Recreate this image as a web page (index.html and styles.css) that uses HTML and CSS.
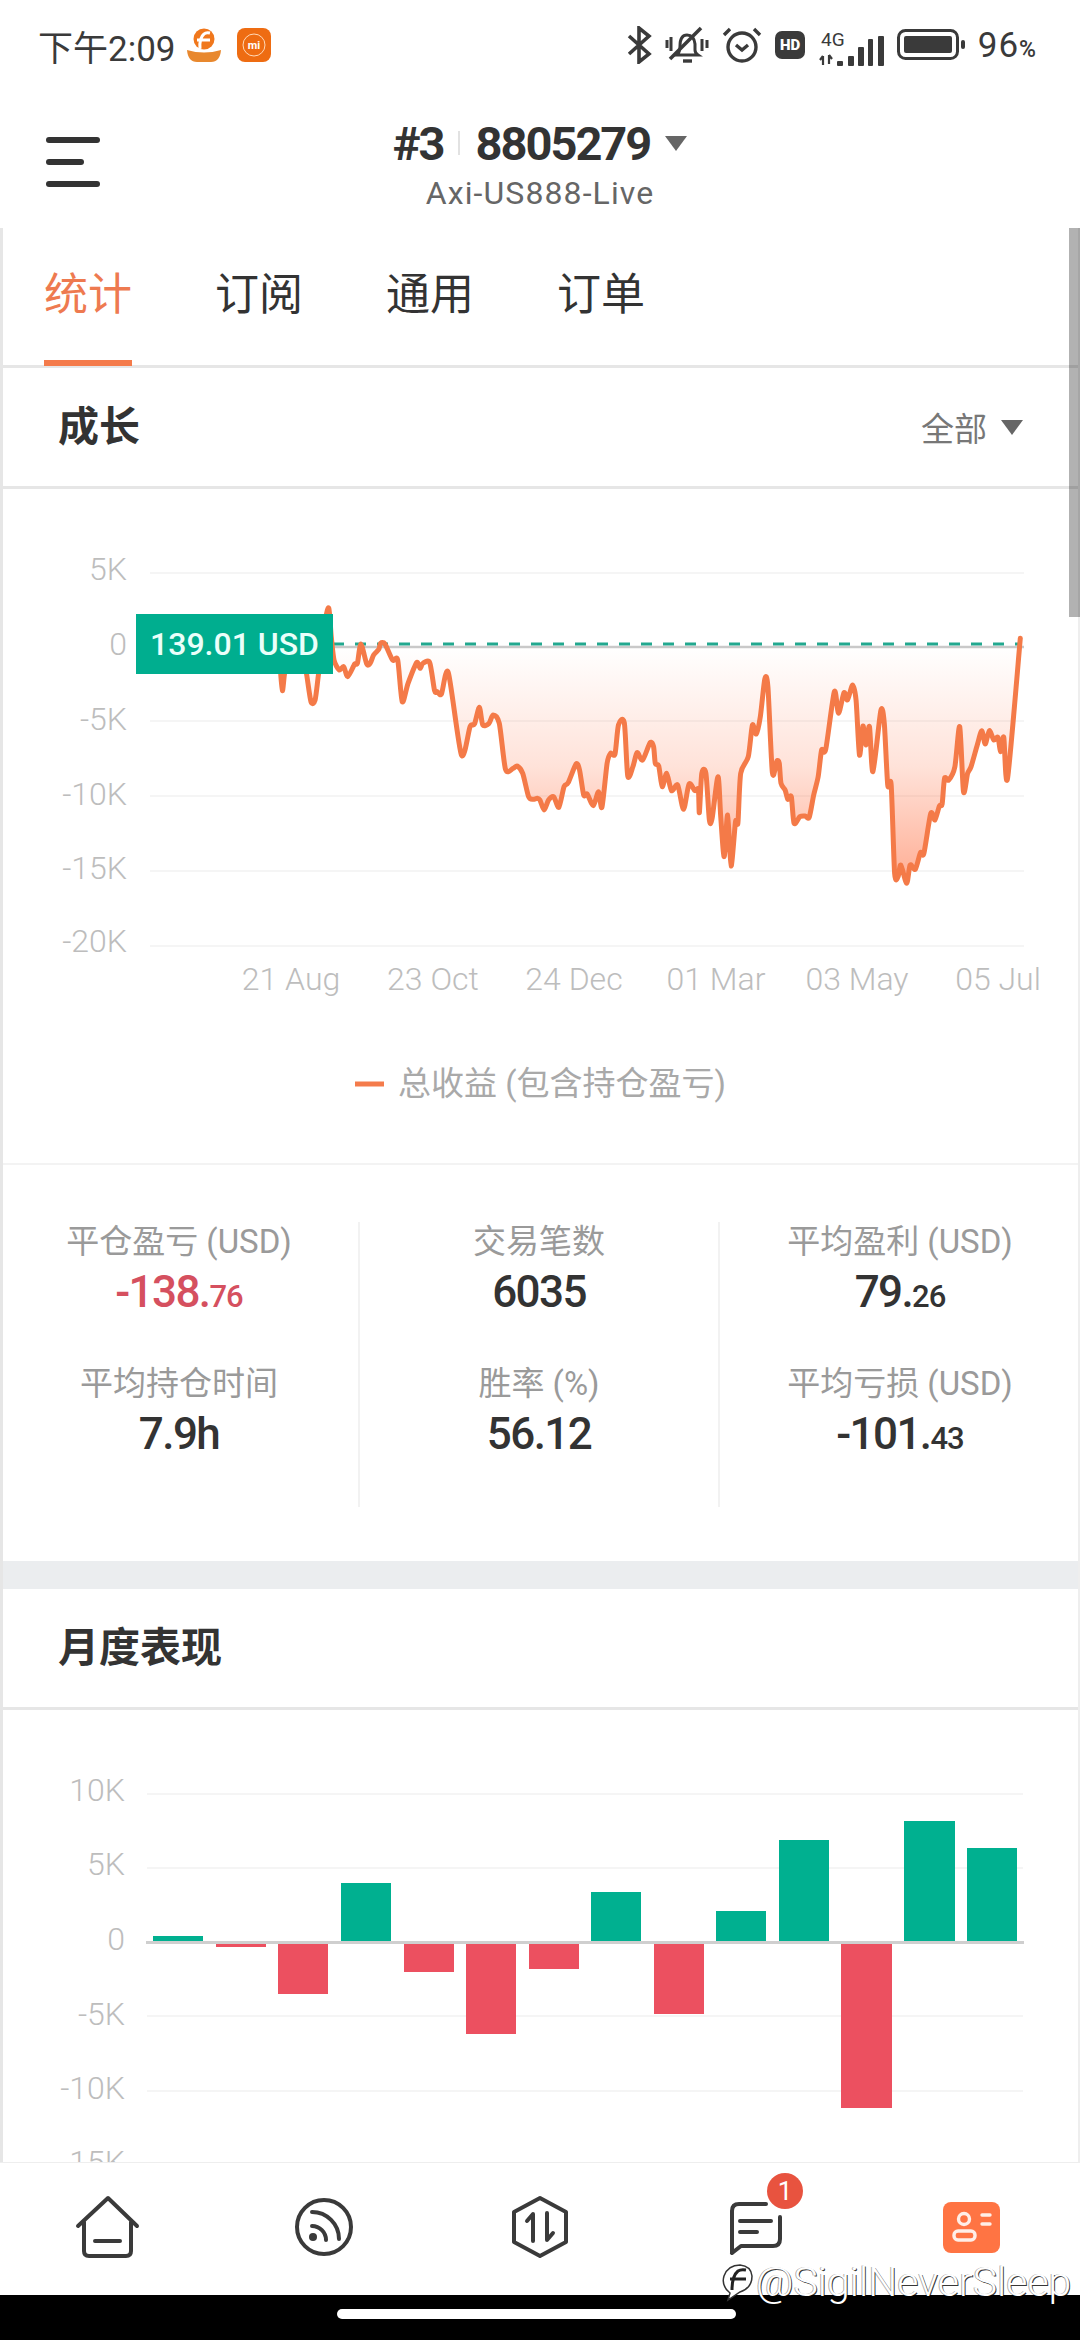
FILE: index.html
```html
<!DOCTYPE html>
<html lang="zh-CN">
<head>
  <meta charset="UTF-8">
  <title>8805279</title>
  <link rel="stylesheet" href="styles.css">
</head>
<body>
<div class="phone">

  <div class="status">
    <div class="status-left">
      <span class="time">下午2:09</span>
      <svg class="app-logo" width="34" height="34" viewBox="0 0 34 34">
        <circle cx="17" cy="11" r="10.5" fill="#f0771c"/>
        <path d="M13 21 Q12 10 17 6 Q19 4 23 5 M10 12 H23" fill="none" stroke="#fff" stroke-width="3"/>
        <path d="M0 22 Q17 27 34 22 Q33 34 24 34 H10 Q1 34 0 22Z" fill="#e8882e"/>
      </svg>
      <svg class="app-logo mi" width="34" height="34" viewBox="0 0 34 34">
        <rect width="34" height="34" rx="8" fill="#ee6c12"/>
        <circle cx="17" cy="17" r="11" fill="none" stroke="#ffd9b8" stroke-width="1"/>
        <text x="17" y="20.5" text-anchor="middle" class="mi-text">mi</text>
      </svg>
    </div>
    <div class="status-right">
      <svg width="25" height="38" viewBox="0 0 25 38" fill="none" stroke="#3a3a3a" stroke-width="3.6">
        <path d="M2 10 L22 28 L12 36 V2 L22 10 L2 28"/>
      </svg>
      <svg width="44" height="38" viewBox="0 0 44 38" fill="none" stroke="#3a3a3a" stroke-width="3">
        <path d="M12 29 Q15 26 15 20 Q15 9 22 9 Q29 9 30 18 V24 Q30 27 33 29 Z"/>
        <path d="M36 2 L5 33" stroke-width="3.6"/>
        <path d="M2 14 V22 M6 11 V25 M37 13 V25 M42 14 V22"/>
        <path d="M18 35 H27" stroke-width="3.4"/>
      </svg>
      <svg width="40" height="36" viewBox="0 0 40 36" fill="none" stroke="#3a3a3a" stroke-width="3.4">
        <circle cx="20" cy="20" r="14"/>
        <path d="M14 18 L20 23 L26 18"/>
        <path d="M2 8 L8 2 M38 8 L32 2"/>
      </svg>
      <svg width="30" height="28" viewBox="0 0 30 28">
        <rect width="30" height="28" rx="7" fill="#3a3a3a"/>
        <text x="15" y="19" text-anchor="middle" class="hd-text">HD</text>
      </svg>
      <svg width="66" height="44" viewBox="0 -8 66 44">
        <text x="3" y="15" class="net-text">4G</text>
        <path d="M5 25 V34 M2 29 L5 25 M11 24 V33 M11 24 L14 28" fill="none" stroke="#3a3a3a" stroke-width="2.2"/>
        <g fill="#3a3a3a">
          <rect x="19" y="30" width="6" height="5" rx="1"/>
          <rect x="30" y="25" width="6" height="10" rx="1"/>
          <rect x="40" y="16" width="6" height="19" rx="1"/>
          <rect x="50" y="8" width="5" height="27" rx="1"/>
          <rect x="60" y="5" width="6" height="30" rx="1"/>
        </g>
      </svg>
      <svg width="68" height="32" viewBox="0 0 68 32">
        <rect x="1.5" y="1.5" width="59" height="28" rx="7" fill="none" stroke="#3a3a3a" stroke-width="3"/>
        <rect x="7" y="7" width="48" height="17" rx="2" fill="#3a3a3a"/>
        <rect x="64" y="11" width="4" height="9" rx="2" fill="#3a3a3a"/>
      </svg>
      <span class="battery">96<small>%</small></span>
    </div>
  </div>

  <header class="topbar">
    <div class="burger"><i></i><i class="short"></i><i></i></div>
    <div class="account">
      <div class="account-id">
        <span>#3</span><b class="sep"></b><span>8805279</span><b class="caret caret-lg"></b>
      </div>
      <div class="account-server">Axi-US888-Live</div>
    </div>
  </header>

  <main class="content">
    <nav class="tabs">
      <a class="tab active">统计</a>
      <a class="tab">订阅</a>
      <a class="tab">通用</a>
      <a class="tab">订单</a>
    </nav>

    <div class="sec-head">
      <h2>成长</h2>
      <div class="filter">全部<b class="caret"></b></div>
    </div>

    <!-- growth chart, viewBox uses screen coordinates -->
    <svg class="chart" width="1080" height="674" viewBox="0 489 1080 674">
      <defs>
        <linearGradient id="areaFade" gradientUnits="userSpaceOnUse" x1="0" y1="381" x2="0" y2="1095">
          <stop offset="0" stop-color="#ff7043" stop-opacity="0"/>
          <stop offset=".5" stop-color="#ff7043" stop-opacity=".2"/>
          <stop offset="1" stop-color="#ff7043" stop-opacity=".58"/>
        </linearGradient>
      </defs>
      <g class="grid">
        <path d="M150 573 H1024 M150 721 H1024 M150 796 H1024 M150 871 H1024 M150 946 H1024"/>
      </g>
      <g class="axis-y" text-anchor="end">
        <text x="127" y="580">5K</text>
        <text x="127" y="655">0</text>
        <text x="127" y="730">-5K</text>
        <text x="127" y="805">-10K</text>
        <text x="127" y="879">-15K</text>
        <text x="127" y="952">-20K</text>
      </g>
      <g class="axis-x" text-anchor="middle">
        <text x="291" y="990">21 Aug</text>
        <text x="433" y="990">23 Oct</text>
        <text x="574" y="990">24 Dec</text>
        <text x="716" y="990">01 Mar</text>
        <text x="857" y="990">03 May</text>
        <text x="998" y="990">05 Jul</text>
      </g>
      <path d="M333 647 H1024" stroke="#c9c9c9" stroke-width="2.5"/>
      <g transform="translate(0 520) scale(.34435 .33333)">
        <path id="growthArea" fill="url(#areaFade)"/>
      </g>
      <path d="M333 644 H1018" stroke="#22a88f" stroke-width="3" stroke-dasharray="11 11"/>
      <g transform="translate(0 520) scale(.34435 .33333)">
        <path id="growthLine"/>
      </g>
      <rect x="136" y="614" width="197" height="60" fill="#00ae8f"/>
      <text x="234.5" y="655" text-anchor="middle" class="tip-text">139.01 USD</text>
      <path d="M355 1084 H384" stroke="#f47b4b" stroke-width="5"/>
      <text x="398" y="1095" class="legend">总收益 (包含持仓盈亏)</text>
    </svg>

    <section class="stats">
      <div class="stat-col">
        <div class="stat"><label>平仓盈亏 (USD)</label><div class="val neg">-138.<small>76</small></div></div>
        <div class="stat"><label>平均持仓时间</label><div class="val">7.9h</div></div>
      </div>
      <div class="stat-col">
        <div class="stat"><label>交易笔数</label><div class="val">6035</div></div>
        <div class="stat"><label>胜率 (%)</label><div class="val">56.12</div></div>
      </div>
      <div class="stat-col">
        <div class="stat"><label>平均盈利 (USD)</label><div class="val">79.<small>26</small></div></div>
        <div class="stat"><label>平均亏损 (USD)</label><div class="val">-101.<small>43</small></div></div>
      </div>
    </section>

    <div class="divider"></div>

    <div class="sec-head">
      <h2>月度表现</h2>
    </div>

    <svg class="chart" width="1080" height="452" viewBox="0 1710 1080 452">
      <g class="grid">
        <path d="M147 1794 H1023 M147 1868 H1023 M147 2016 H1023 M147 2091 H1023"/>
      </g>
      <g class="axis-y" text-anchor="end">
        <text x="125" y="1801">10K</text>
        <text x="125" y="1875">5K</text>
        <text x="125" y="1950">0</text>
        <text x="125" y="2025">-5K</text>
        <text x="125" y="2099">-10K</text>
        <text x="125" y="2173">-15K</text>
      </g>
      <g fill="#00b090">
        <rect x="153" y="1936" width="50" height="6"/>
        <rect x="341" y="1883" width="50" height="59"/>
        <rect x="591" y="1892" width="50" height="50"/>
        <rect x="716" y="1911" width="50" height="31"/>
        <rect x="779" y="1840" width="50" height="102"/>
        <rect x="904" y="1821" width="51" height="121"/>
        <rect x="967" y="1848" width="50" height="94"/>
      </g>
      <g fill="#ec5060">
        <rect x="216" y="1942" width="50" height="5"/>
        <rect x="278" y="1942" width="50" height="52"/>
        <rect x="404" y="1942" width="50" height="30"/>
        <rect x="466" y="1942" width="50" height="92"/>
        <rect x="529" y="1942" width="50" height="27"/>
        <rect x="654" y="1942" width="50" height="72"/>
        <rect x="841" y="1942" width="51" height="166"/>
      </g>
      <path d="M146 1942.5 H1024" stroke="#cfcfcf" stroke-width="3"/>
    </svg>
  </main>

  <footer class="tabbar">
    <a class="tabbar-item">
      <svg class="nav-icon" width="72" height="72" viewBox="0 0 72 72">
        <path d="M6 35 L36 7 L65 35 M12 31 V60 Q12 65 17 65 H54 Q59 65 59 60 V31 M23 50 H48"/>
      </svg>
    </a>
    <a class="tabbar-item">
      <svg class="nav-icon" width="72" height="72" viewBox="0 0 72 72">
        <circle cx="36" cy="36" r="27"/>
        <path d="M24 35 A14 14 0 0 1 38 49 M24 21 A27 27 0 0 1 51 48"/>
        <circle cx="25" cy="46" r="4" fill="#3a3a3a" stroke="none"/>
      </svg>
    </a>
    <a class="tabbar-item">
      <svg class="nav-icon" width="72" height="72" viewBox="0 0 72 72">
        <path d="M36 7 L62 21 V51 L36 65 L10 51 V21 Z"/>
        <path d="M29 50 V23 L23 30 M43 22 V49 L49 42"/>
      </svg>
    </a>
    <a class="tabbar-item">
      <svg class="nav-icon" width="72" height="72" viewBox="0 0 72 72">
        <path d="M12 62 V20 Q12 13 19 13 H46 M60 26 V48 Q60 55 53 55 H21 L12 62 M20 30 H51 M20 41 H37"/>
      </svg>
      <span class="badge">1</span>
    </a>
    <a class="tabbar-item">
      <svg width="72" height="72" viewBox="0 0 72 72">
        <rect x="7" y="11" width="57" height="51" rx="8" fill="#ff7443"/>
        <g fill="none" stroke="#ffeee7" stroke-width="3.4" stroke-linecap="round">
          <circle cx="28" cy="28" r="5.5"/>
          <rect x="18" y="40" width="21" height="9" rx="4"/>
          <path d="M46 24 H54 M46 33 H54"/>
        </g>
      </svg>
    </a>
  </footer>

  <div class="homebar"><i></i></div>

  <div class="edge-left"></div>
  <div class="edge-right"></div>
  <div class="scroll-thumb"></div>

  <div class="watermark">
    <svg width="34" height="40" viewBox="0 0 34 40" fill="none">
      <path d="M8 38 L10 31 Q1 24 4 14 Q8 3 20 3 Q31 4 32 14 Q32 26 20 30 Z" stroke="#333" stroke-width="1.5" fill="#fff"/>
      <path d="M12 28 Q12 14 18 9 Q21 7 26 8 M10 17 H26" stroke="#222" stroke-width="3"/>
    </svg>
    <span>@SigilNeverSleep</span>
  </div>
</div>
<script src="chart.js"></script>
</body>
</html>
```

FILE: styles.css
```css
html, body {
  margin: 0;
  padding: 0;
  background: #fff;
}

body {
  font-family: Roboto, 'Noto Sans CJK SC', sans-serif;
  color: #333;
}

.phone {
  position: relative;
  width: 1080px;
  height: 2340px;
  overflow: hidden;
  display: flex;
  flex-direction: column;
}

/* status bar */
.status {
  height: 90px;
  flex: none;
  display: flex;
  justify-content: space-between;
  align-items: center;
  padding: 0 43px 0 38px;
  box-sizing: border-box;
}

.status-left, .status-right {
  display: flex;
  align-items: center;
}

.status-right {
  gap: 13px;
}

.time {
  font-size: 35px;
  color: #3a3a3a;
  margin-right: 11px;
}

.app-logo.mi {
  margin-left: 16px;
}

.mi-text {
  font: 700 11px Roboto, sans-serif;
  fill: #fff;
}

.hd-text {
  font: 900 15px Roboto, sans-serif;
  fill: #fff;
}

.net-text {
  font: 400 19px Roboto, sans-serif;
  fill: #3a3a3a;
}

.battery {
  font-size: 35px;
  color: #3a3a3a;
  letter-spacing: 1px;
}

.battery small {
  font-size: 23px;
  font-weight: 500;
}

/* top bar */
.topbar {
  height: 138px;
  flex: none;
  position: relative;
  display: flex;
  justify-content: center;
  box-sizing: border-box;
  padding-top: 25px;
}

.burger {
  position: absolute;
  left: 46px;
  top: 47px;
  width: 54px;
}

.burger i {
  display: block;
  height: 6px;
  border-radius: 3px;
  background: #333;
  margin-bottom: 16px;
}

.burger i.short {
  width: 38px;
}

.account {
  text-align: center;
}

.account-id {
  display: flex;
  align-items: center;
  height: 56px;
  font-size: 47px;
  font-weight: 700;
  letter-spacing: -2px;
  color: #333;
}

.sep {
  width: 2px;
  height: 24px;
  background: #e2e2e2;
  margin: 0 16px 0 14px;
}

.caret {
  display: inline-block;
  width: 0;
  height: 0;
  border-left: 11px solid transparent;
  border-right: 11px solid transparent;
  border-top: 15px solid #666;
}

.caret-lg {
  margin-left: 15px;
}

.account-server {
  font-size: 32px;
  line-height: 44px;
  letter-spacing: 1.1px;
  color: #666;
}

/* scroll area */
.content {
  flex: 1;
  overflow: hidden;
}

.tabs {
  height: 140px;
  box-sizing: border-box;
  border-bottom: 3px solid #e6e6e6;
  display: flex;
  gap: 83px;
  padding-left: 44px;
}

.tab {
  width: 88px;
  height: 138px;
  box-sizing: border-box;
  padding-top: 42px;
  text-align: center;
  font-size: 44px;
  line-height: 50px;
  color: #333;
}

.tab.active {
  color: #ee7a50;
  border-bottom: 6px solid #f47b4b;
}

.sec-head {
  height: 121px;
  box-sizing: border-box;
  border-bottom: 3px solid #e6e6e6;
  padding: 0 57px 8px 58px;
  display: flex;
  justify-content: space-between;
  align-items: center;
}

.sec-head h2 {
  margin: 0;
  font-size: 41px;
  font-weight: 700;
  color: #333;
}

.filter {
  display: flex;
  align-items: center;
  gap: 14px;
  font-size: 33px;
  color: #777;
  padding-top: 8px;
}

.chart {
  display: block;
}

.grid path {
  fill: none;
  stroke: #f5f5f5;
  stroke-width: 2;
}

.axis-y text, .axis-x text {
  font: 300 32px Roboto, sans-serif;
  fill: #bdbdbd;
}

#growthLine {
  fill: none;
  stroke: #f47a48;
  stroke-width: 5;
  stroke-linejoin: round;
  stroke-linecap: round;
  vector-effect: non-scaling-stroke;
}

.tip-text {
  font: 500 32px Roboto, sans-serif;
  fill: #eafffa;
}

.legend {
  font: 400 33px Roboto, 'Noto Sans CJK SC', sans-serif;
  fill: #a9a9a9;
}

/* numbers under the growth chart */
.stats {
  height: 398px;
  box-sizing: border-box;
  border-top: 2px solid #f3f3f3;
  padding-top: 57px;
  display: grid;
  grid-template-columns: repeat(3, 1fr);
  align-items: start;
}

.stat-col {
  height: 285px;
  border-right: 2px solid #f2f2f2;
  text-align: center;
}

.stat-col:last-child {
  border-right: 0;
}

.stat {
  height: 142px;
}

.stat label {
  display: block;
  font-size: 33px;
  line-height: 40px;
  color: #9a9a9a;
}

.val {
  font-size: 44px;
  font-weight: 480;
  letter-spacing: -1.6px;
  line-height: 60px;
  color: #333;
}

.val small {
  font-size: 31px;
  letter-spacing: -1px;
}

.val.neg {
  color: #d5505f;
}

.divider {
  height: 28px;
  background: #ebedef;
}

/* bottom tabs */
.tabbar {
  height: 133px;
  flex: none;
  box-sizing: border-box;
  border-top: 1px solid #eee;
  padding-top: 28px;
  display: flex;
  background: #fff;
}

.tabbar-item {
  flex: 1;
  position: relative;
  display: flex;
  justify-content: center;
  align-items: flex-start;
}

.nav-icon {
  fill: none;
  stroke: #3a3a3a;
  stroke-width: 4;
  stroke-linecap: round;
  stroke-linejoin: round;
}

.badge {
  position: absolute;
  left: 119px;
  top: -18px;
  width: 36px;
  height: 36px;
  border-radius: 50%;
  background: #e8533f;
  color: #fff;
  font-size: 26px;
  line-height: 36px;
  text-align: center;
}

.homebar {
  height: 45px;
  flex: none;
  background: #000;
  display: flex;
  justify-content: center;
  padding: 14px 8px 0 0;
  box-sizing: border-box;
}

.homebar i {
  width: 399px;
  height: 10px;
  border-radius: 5px;
  background: #fff;
}

/* thin overlays along the sides of the scroll area */
.edge-left {
  position: absolute;
  left: 0;
  top: 228px;
  width: 3px;
  height: 1934px;
  background: #e6e6e6;
}

.edge-right {
  position: absolute;
  right: 0;
  top: 228px;
  width: 2px;
  height: 1934px;
  background: #eee;
}

.scroll-thumb {
  position: absolute;
  right: 0;
  top: 228px;
  width: 11px;
  height: 389px;
  background: rgba(0, 0, 0, .3);
}

.watermark {
  position: absolute;
  left: 720px;
  top: 2258px;
  display: flex;
  align-items: center;
  gap: 2px;
}

.watermark span {
  font-size: 41px;
  font-weight: 300;
  color: #fff;
  text-shadow: 1px 1px 0 rgba(0, 0, 0, .8), -1px 0 0 rgba(0, 0, 0, .35);
}
```

FILE: chart.js
```js
// growth curve, x/y pairs read off the chart
const points = [
  805,380, 812,420, 820,512, 830,440, 860,400, 880,410, 890,460, 903,545, 915,540, 925,462,
  945,300, 955,265, 962,350, 970,420, 985,450, 998,440, 1010,470, 1030,432, 1038,430, 1048,372,
  1065,432, 1075,430, 1085,405, 1100,388, 1105,370, 1118,372, 1140,420, 1155,420, 1168,545, 1185,490,
  1210,428, 1220,445, 1228,430, 1248,428, 1262,512, 1270,515, 1282,522, 1302,458, 1340,705, 1365,620,
  1378,612, 1392,562, 1402,615, 1420,610, 1432,585, 1450,610, 1468,748, 1490,745, 1502,738, 1518,760,
  1535,830, 1548,838, 1560,835, 1568,840, 1580,870, 1593,840, 1608,830, 1623,862, 1638,800, 1650,788,
  1673,732, 1683,750, 1695,825, 1705,822, 1723,857, 1738,815, 1748,862, 1763,730, 1773,700, 1786,702,
  1796,615, 1813,608, 1823,768, 1838,740, 1850,698, 1866,720, 1888,668, 1898,680, 1903,730, 1913,738,
  1923,800, 1936,760, 1950,812, 1968,795, 1985,868, 2001,792, 2018,812, 2028,808, 2031,878, 2038,760,
  2050,760, 2060,900, 2068,895, 2085,770, 2093,890, 2103,1010, 2113,885, 2123,1038, 2136,905, 2143,908,
  2151,760, 2173,710, 2185,615, 2196,642, 2208,590, 2221,477, 2230,500, 2243,758, 2256,723, 2263,730,
  2268,790, 2280,810, 2288,838, 2298,830, 2306,910, 2323,890, 2338,888, 2350,892, 2363,825, 2376,770,
  2386,690, 2398,688, 2423,515, 2435,580, 2451,518, 2461,540, 2476,495, 2486,540, 2496,705, 2506,618,
  2515,675, 2525,620, 2535,755, 2558,572, 2568,610, 2578,795, 2588,795, 2598,1060, 2608,1070, 2616,1035,
  2633,1090, 2643,1035, 2658,1048, 2673,998, 2683,1000, 2703,880, 2715,900, 2728,858, 2736,852, 2743,775,
  2755,780, 2773,740, 2787,620, 2798,815, 2810,760, 2820,740, 2838,675, 2851,632, 2861,672, 2873,632,
  2886,660, 2898,652, 2906,695, 2915,652, 2926,775, 2963,355
];

function smoothPath(pts) {
  const n = pts.length / 2;
  const px = i => pts[Math.max(0, Math.min(n - 1, i)) * 2];
  const py = i => pts[Math.max(0, Math.min(n - 1, i)) * 2 + 1];
  const k = 0.13;
  let d = `M${px(0)} ${py(0)}`;
  for (let i = 0; i < n - 1; i++) {
    const c1x = px(i) + (px(i + 1) - px(i - 1)) * k;
    const c1y = py(i) + (py(i + 1) - py(i - 1)) * k;
    const c2x = px(i + 1) - (px(i + 2) - px(i)) * k;
    const c2y = py(i + 1) - (py(i + 2) - py(i)) * k;
    d += ` C${c1x.toFixed(1)} ${c1y.toFixed(1)} ${c2x.toFixed(1)} ${c2y.toFixed(1)} ${px(i + 1)} ${py(i + 1)}`;
  }
  return d;
}

const line = smoothPath(points);
document.getElementById("growthLine").setAttribute("d", line);
document.getElementById("growthArea").setAttribute("d", line + " Z");
```
